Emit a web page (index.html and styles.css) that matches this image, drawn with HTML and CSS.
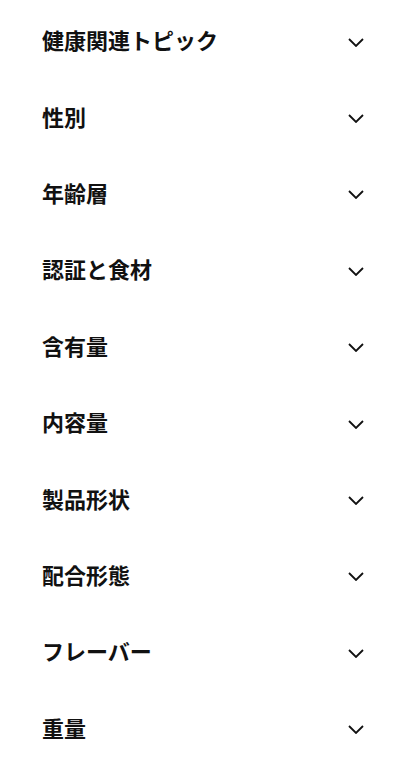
FILE: index.html
```html
<!DOCTYPE html>
<html lang="ja">
<head>
    <meta charset="UTF-8">
    <meta name="viewport" content="width=device-width, initial-scale=1.0">
    <title>フィルター</title>
    <link rel="stylesheet" href="styles.css">
</head>
<body>
    <div class="filters">
        <div class="filter"><span class="label">健康関連トピック</span><svg class="chev" viewBox="0 0 16 9"><path d="M1 1 L8 8 L15 1"/></svg></div>
        <div class="filter"><span class="label">性別</span><svg class="chev" viewBox="0 0 16 9"><path d="M1 1 L8 8 L15 1"/></svg></div>
        <div class="filter"><span class="label">年齢層</span><svg class="chev" viewBox="0 0 16 9"><path d="M1 1 L8 8 L15 1"/></svg></div>
        <div class="filter"><span class="label">認証と食材</span><svg class="chev" viewBox="0 0 16 9"><path d="M1 1 L8 8 L15 1"/></svg></div>
        <div class="filter"><span class="label">含有量</span><svg class="chev" viewBox="0 0 16 9"><path d="M1 1 L8 8 L15 1"/></svg></div>
        <div class="filter"><span class="label">内容量</span><svg class="chev" viewBox="0 0 16 9"><path d="M1 1 L8 8 L15 1"/></svg></div>
        <div class="filter"><span class="label">製品形状</span><svg class="chev" viewBox="0 0 16 9"><path d="M1 1 L8 8 L15 1"/></svg></div>
        <div class="filter"><span class="label">配合形態</span><svg class="chev" viewBox="0 0 16 9"><path d="M1 1 L8 8 L15 1"/></svg></div>
        <div class="filter"><span class="label">フレーバー</span><svg class="chev" viewBox="0 0 16 9"><path d="M1 1 L8 8 L15 1"/></svg></div>
        <div class="filter"><span class="label">重量</span><svg class="chev" viewBox="0 0 16 9"><path d="M1 1 L8 8 L15 1"/></svg></div>
    </div>
</body>
</html>
```

FILE: styles.css
```css
*, *::before, *::after {
    box-sizing: border-box;
}
body {
    margin: 0;
    background: #fff;
    font-family: "Noto Sans CJK JP", "Noto Sans", sans-serif;
    color: #111;
}
.filters {
    padding: 1px 36px 0 42px;
}
.filter {
    display: flex;
    justify-content: space-between;
    align-items: center;
    height: 76.4px;
}
.label {
    font-size: 22px;
    font-weight: 700;
    line-height: 1;
}
.chev {
    width: 16px;
    height: 9px;
    margin-top: 6px;
    fill: none;
    stroke: #111;
    stroke-width: 1.8;
}
```
